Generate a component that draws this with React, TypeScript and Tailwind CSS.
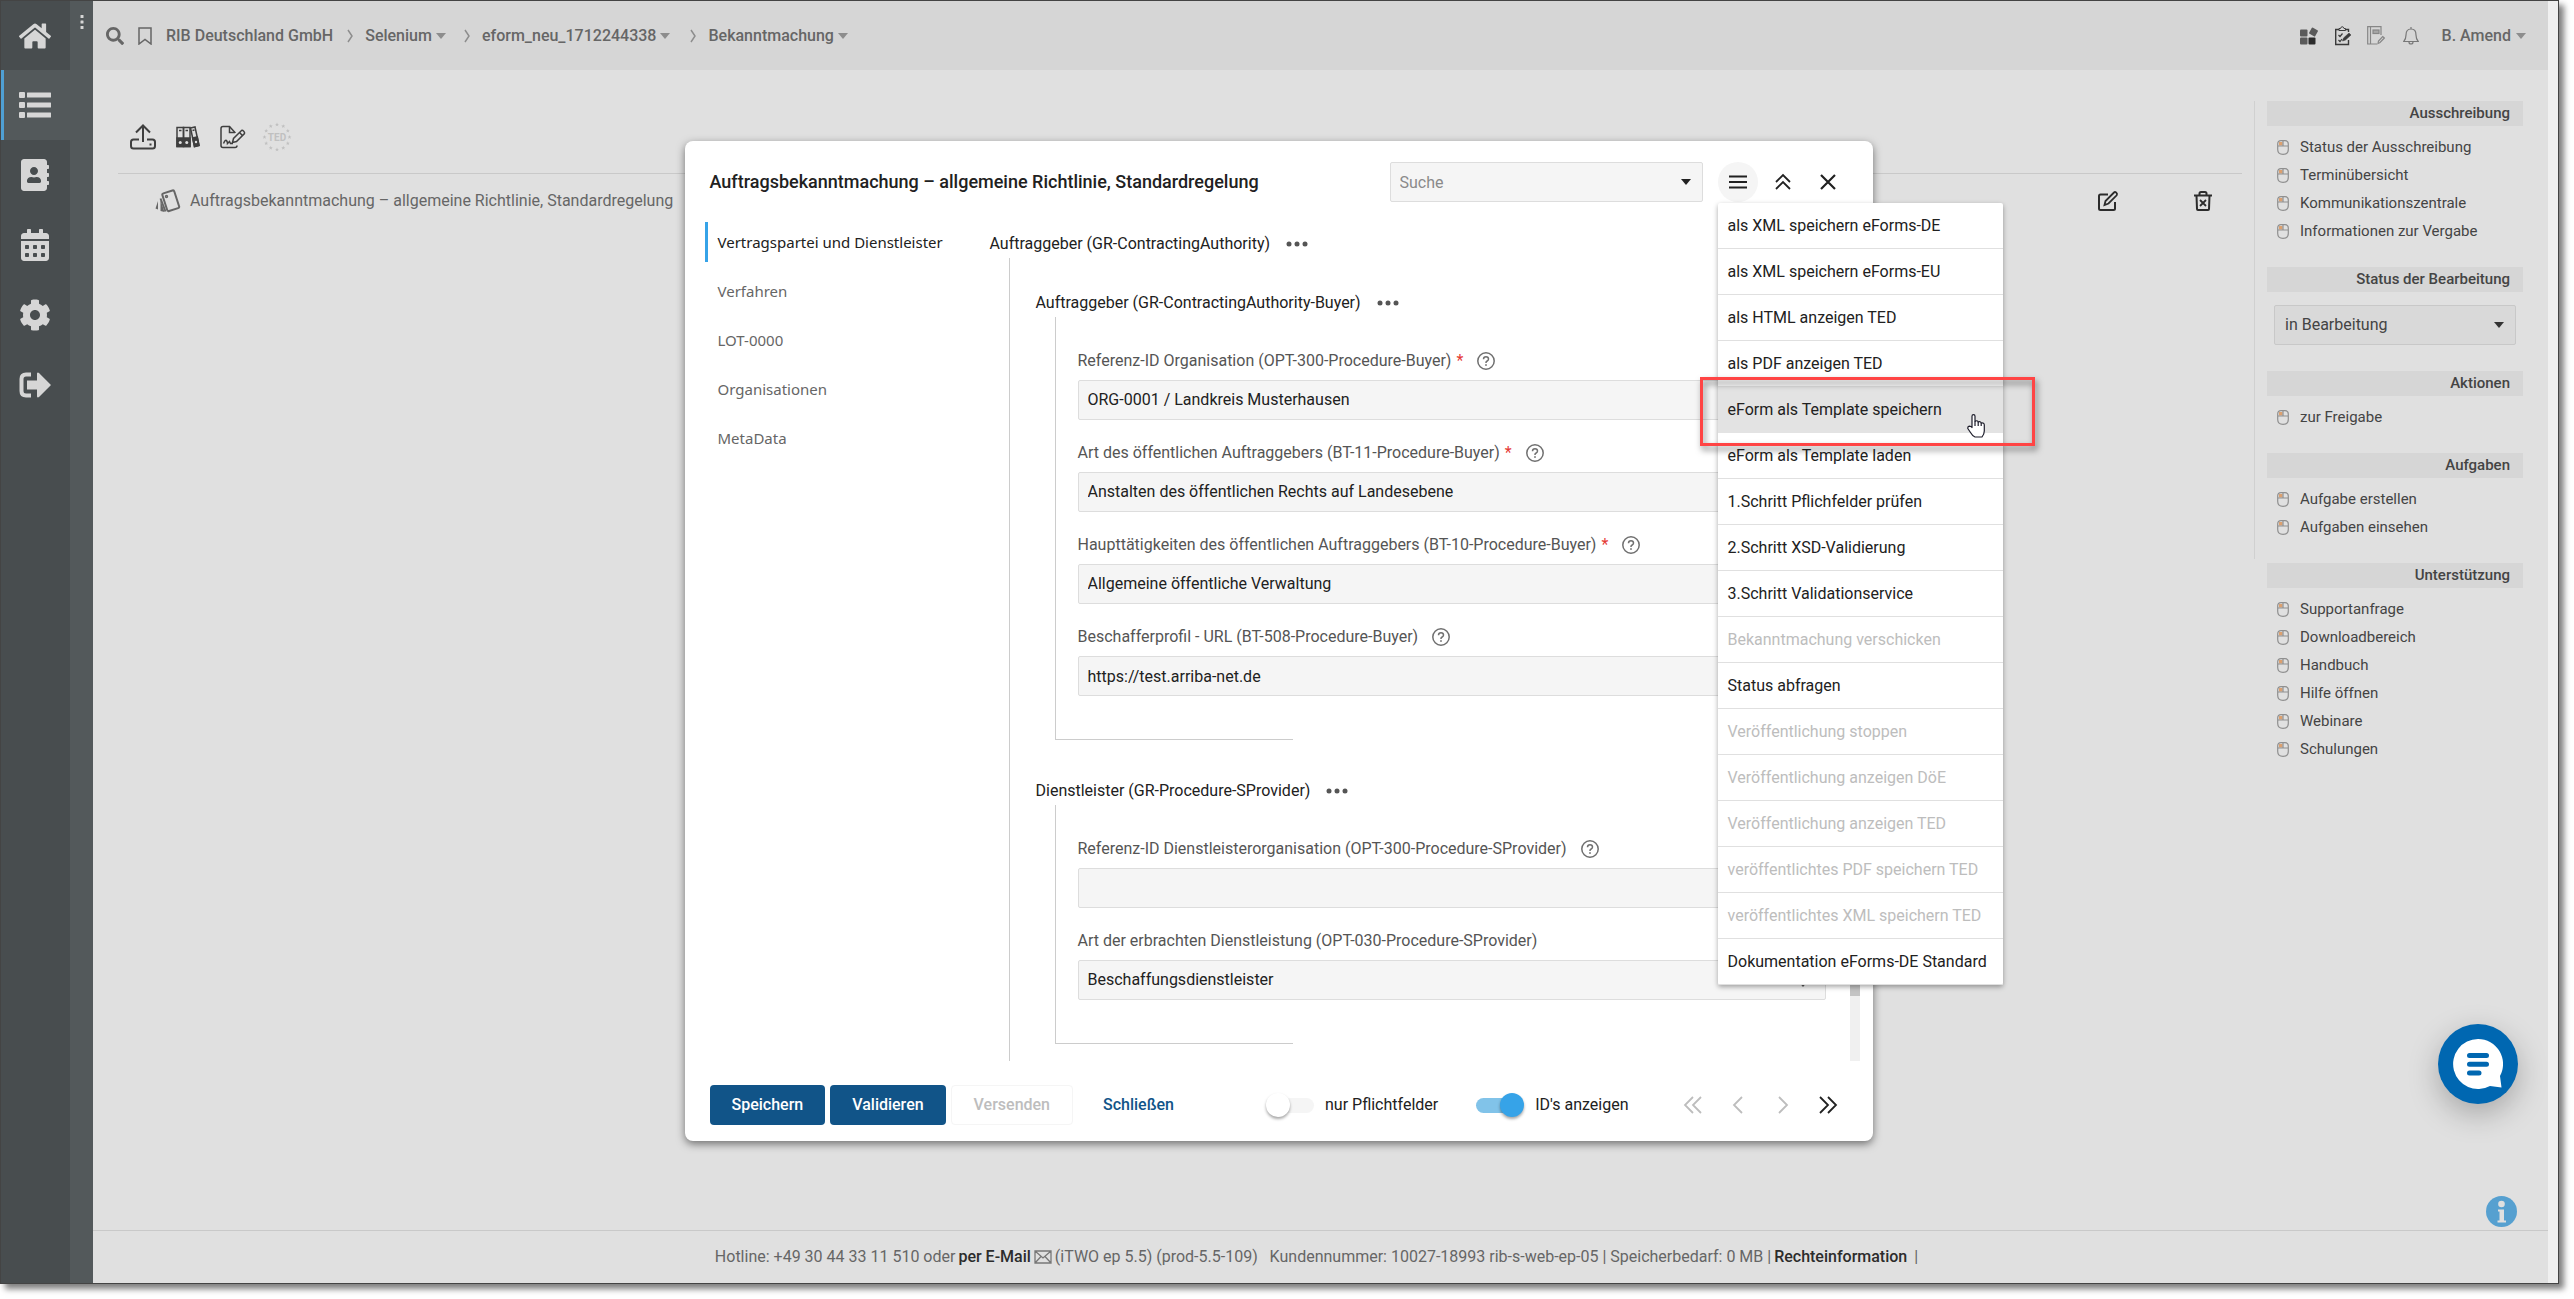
import { useState } from "react";
import type { ReactNode } from "react";
import { FaAddressBook, FaCalendarAlt, FaCog, FaHome, FaSearch } from "react-icons/fa";

interface IconProps {
  className?: string;
}

const Caret = ({ className = "" }: IconProps) => (
  <svg viewBox="0 0 10 6" className={`h-[6px] w-[10px] shrink-0 ${className}`} fill="currentColor" aria-hidden="true">
    <path d="M0 0H10L5 6Z" />
  </svg>
);

const Crumb = () => (
  <svg viewBox="0 0 6 14" className="h-[14px] w-[6px] shrink-0 text-[#8d8d8d]" fill="none" aria-hidden="true">
    <path d="M1 1L5 7L1 13" stroke="currentColor" strokeWidth="1.5" />
  </svg>
);

const ListIcon = () => (
  <svg viewBox="0 0 32 28" className="h-7 w-8" fill="currentColor" aria-hidden="true">
    <rect x="0" y="1" width="6" height="6" rx="1" />
    <rect x="8" y="1.500" width="24" height="5" rx="0.500" />
    <rect x="0" y="11" width="6" height="6" rx="1" />
    <rect x="8" y="11.500" width="24" height="5" rx="0.500" />
    <rect x="0" y="21" width="6" height="6" rx="1" />
    <rect x="8" y="21.500" width="24" height="5" rx="0.500" />
  </svg>
);

const ExitIcon = () => (
  <svg viewBox="0 0 32 26" className="h-[26px] w-8" aria-hidden="true">
    <path d="M12 2.500H7Q2.500 2.500 2.500 7V19Q2.500 23.500 7 23.500H12" fill="none" stroke="currentColor" strokeWidth="4" />
    <path d="M8 8.500H18V1.500Q18.500 0 20 1L32 13L20 25Q18.500 26 18 24.500V17.500H8Z" fill="currentColor" />
  </svg>
);

const UploadIcon = () => (
  <svg viewBox="0 0 26 26" className="h-[26px] w-[26px]" fill="none" stroke="currentColor" strokeWidth="2" aria-hidden="true">
    <path d="M13 18V2M6 8.500L13 1.500L20 8.500" />
    <path d="M9 15.500H3.500Q1 15.500 1 18V22Q1 24.500 3.500 24.500H22.500Q25 24.500 25 22V18Q25 15.500 22.500 15.500H17" />
    <path d="M19.500 20.500H21.500" />
  </svg>
);

const BindersIcon = () => (
  <svg viewBox="0 0 24 22" className="h-[22px] w-6" fill="none" stroke="currentColor" strokeWidth="1.500" aria-hidden="true">
    <rect x="1" y="1.500" width="6.500" height="19" />
    <rect x="7.500" y="1.500" width="6.500" height="19" />
    <path d="M14.500 2L19 1L23 19.500L18.500 20.500Z" />
    <path d="M1 12H14V20.500H1ZM16.700 12L21.300 11L23 19.500L18.500 20.500Z" fill="currentColor" />
    <path d="M3 4.500H5.500M9.500 4.500H12M16.500 4.500L18.500 4" />
    <circle cx="4.250" cy="16.500" r="1.500" fill="#e0e0e0" stroke="none" />
    <circle cx="10.750" cy="16.500" r="1.500" fill="#e0e0e0" stroke="none" />
    <circle cx="20" cy="16" r="1.200" fill="#e0e0e0" stroke="none" />
  </svg>
);

const SignDocIcon = () => (
  <svg viewBox="0 0 26 24" className="h-6 w-[26px]" fill="none" stroke="currentColor" strokeWidth="1.500" aria-hidden="true">
    <path d="M15 8V7.500L9.500 1.500H3Q1 1.500 1 3.500V20.500Q1 22.500 3 22.500H15Q17 22.500 17 20.500" />
    <path d="M9.500 1.500V7.500H15" />
    <path d="M3.500 18.500Q5.500 14 6.500 15.500T7.500 18.500L9.500 16.500L10.500 18.500H13" />
    <path d="M12.500 17.500L13.500 13.500L21.500 5.500Q22.500 5 23.700 6.200T24.500 8.500L16.500 16.500Z" />
    <path d="M19.500 7.500L22.500 10.500" />
  </svg>
);

const STARS = Array.from({ length: 12 }, (_, i) => ({
  x: 15 + 12.5 * Math.sin((i * Math.PI) / 6),
  y: 15 - 12.5 * Math.cos((i * Math.PI) / 6),
}));

const TedIcon = () => (
  <svg viewBox="0 0 30 30" className="h-[30px] w-[30px] text-[#c0c0c0]" fill="currentColor" aria-hidden="true">
    {STARS.map(({ x, y }, i) => (
      <path
        key={i}
        transform={`translate(${x} ${y})`}
        d="M0 -2L0.600 -0.600L2 -0.600L0.900 0.300L1.300 1.800L0 0.900L-1.300 1.800L-0.900 0.300L-2 -0.600L-0.600 -0.600Z"
      />
    ))}
    <text x="15" y="18.500" textAnchor="middle" className="text-[10px] font-bold">
      TED
    </text>
  </svg>
);

const CardsIcon = () => (
  <svg viewBox="0 0 26 24" className="h-6 w-[26px]" fill="none" stroke="currentColor" strokeWidth="2" aria-hidden="true">
    <rect x="9.500" y="2.500" width="12.500" height="18.500" rx="1.500" transform="rotate(-18 15.750 11.750)" />
    <circle cx="11.500" cy="7.500" r="0.700" />
    <path d="M5.500 11V22L9.500 23L5.500 11Z" fill="currentColor" stroke="none" />
    <path d="M5.500 9.500L10.500 22.500" />
    <path d="M3 12V20.500L0.500 19.500Z" fill="currentColor" stroke="none" />
  </svg>
);

const EditIcon = () => (
  <svg viewBox="0 0 22 22" className="h-[22px] w-[22px]" fill="none" stroke="currentColor" strokeWidth="2" aria-hidden="true">
    <path d="M11 4.500H3.500Q2 4.500 2 6V18.500Q2 20 3.500 20H16.500Q18 20 18 18.500V12" />
    <path d="M7.500 15L8.500 11L17 2.500Q18 1.500 19.300 2.700T19.700 5.300L11.500 13.500Z" strokeWidth="1.800" />
  </svg>
);

const TrashIcon = () => (
  <svg viewBox="0 0 18 20" className="h-5 w-[18px]" fill="none" stroke="currentColor" strokeWidth="2" aria-hidden="true">
    <path d="M0 4.500H18M5.500 4V2.500Q5.500 1 7 1H11Q12.500 1 12.500 2.500V4" />
    <path d="M2.500 4.500L3 18Q3 19 4 19H14Q15 19 15 18L15.500 4.500" />
    <path d="M6 9L12 15M12 9L6 15" strokeWidth="1.800" />
  </svg>
);

const MouseIcon = () => (
  <svg viewBox="0 0 12 15" className="h-[15px] w-3 shrink-0" fill="none" aria-hidden="true">
    <path d="M2 2H5.500V5.500H2Z" fill="#dca06f" />
    <path
      d="M4 0.700H8Q11.300 0.700 11.300 4V9.500Q11.300 14.300 6 14.300T0.700 9.500V4Q0.700 0.700 4 0.700ZM0.700 6H11.300M6 0.700V6"
      stroke="#8f8f8f"
      strokeWidth="1.200"
    />
  </svg>
);

const HelpIcon = () => (
  <svg viewBox="0 0 18 18" className="h-[18px] w-[18px] text-[#707070]" fill="none" stroke="currentColor" aria-hidden="true">
    <circle cx="9" cy="9" r="8.200" strokeWidth="1.500" />
    <path d="M6.500 7.200Q6.500 4.800 9 4.800T11.500 7.100Q11.500 8.400 10.200 9T9 10.600V11" strokeWidth="1.500" />
    <circle cx="9" cy="13" r="0.600" strokeWidth="0.800" fill="currentColor" />
  </svg>
);

const DotsIcon = () => (
  <svg viewBox="0 0 22 6" className="h-[6px] w-[22px] text-[#555]" fill="currentColor" aria-hidden="true">
    <circle cx="3" cy="3" r="2.500" />
    <circle cx="11" cy="3" r="2.500" />
    <circle cx="19" cy="3" r="2.500" />
  </svg>
);

const BellIcon = () => (
  <svg viewBox="0 0 16 18" className="h-[18px] w-4 text-[#777]" fill="none" stroke="currentColor" strokeWidth="1.200" aria-hidden="true">
    <path d="M8 2Q3 2 3 8Q3 12 0.800 14.500H15.200Q13 12 13 8Q13 2 8 2ZM8 0V2" />
    <path d="M6 15Q6 17 8 17T10 15" />
  </svg>
);

const TilesIcon = () => (
  <svg viewBox="0 0 18 18" className="h-[18px] w-[18px]" fill="#5a5a5a" aria-hidden="true">
    <rect x="0" y="2.500" width="7.500" height="7" rx="1" />
    <rect x="0" y="10.500" width="7.500" height="7" rx="1" />
    <rect x="8.500" y="10.500" width="7" height="7" rx="1" fill="#2c2c2c" />
    <rect x="10" y="1.500" width="7" height="7" rx="1" transform="rotate(30 13.500 5)" />
  </svg>
);

const ClipboardPenIcon = () => (
  <svg viewBox="0 0 17 20" className="h-5 w-[17px] text-[#3a3a3a]" fill="none" stroke="currentColor" aria-hidden="true">
    <path d="M4 3.500H0.700V18.500H13.500V14M11 3.500H13.500V6" strokeWidth="1.400" />
    <path d="M4 4.500V2.500H5.500Q6 0.700 7.200 0.700T9 2.500H10.500V4.500Z" strokeWidth="1" />
    <path d="M3.500 9L5 10.500L7.500 7.500M3.500 14L5 15.500L7 13" strokeWidth="1.200" />
    <path d="M7.500 15L8.500 12L14 7L16 9L10.500 14Z" fill="currentColor" strokeWidth="0.500" />
  </svg>
);

const NotebookPenIcon = () => (
  <svg viewBox="0 0 18 19" className="h-[19px] w-[18px] text-[#868686]" fill="none" stroke="currentColor" strokeWidth="1.200" aria-hidden="true">
    <path d="M10 18H0.700V0.700H14V9M3.500 0.700V18" />
    <rect x="6" y="4" width="6" height="3.500" fill="currentColor" fillOpacity="0.600" />
    <path d="M11 17.500L11.500 15L15.700 10.500L17.300 12L13 16.500Z" />
  </svg>
);

const Chevrons = ({ d, className }: { d: string; className: string }) => (
  <svg viewBox="0 0 20 20" className={`h-5 w-5 ${className}`} fill="none" stroke="currentColor" strokeWidth="1.800" aria-hidden="true">
    <path d={d} />
  </svg>
);

const HandCursor = () => (
  <svg viewBox="0 0 18 24" className="absolute top-[27px] left-[249px] h-6 w-[18px]" fill="#fff" stroke="#1d1d2b" strokeWidth="1.200" strokeLinejoin="round" aria-hidden="true">
    <path d="M5 13.500V2.200Q5 0.700 6.500 0.700T8 2.200V7.500Q10.300 5.800 11.200 8Q13.300 7 14.200 9Q17.300 8.500 17.300 11V17Q17.300 20 15 23H8Q5.500 22 3.500 18.500L0.800 14.500Q0.500 12.500 2.300 12.200Q4 12.200 5 13.500Z" />
    <path d="M8 7.500V12M11.200 8V12M14.200 9V12" fill="none" />
  </svg>
);

const railItems = [
  { label: "Startseite", icon: <FaHome size={32} /> },
  { label: "Liste", icon: <ListIcon />, active: true },
  { label: "Adressbuch", icon: <FaAddressBook size={32} /> },
  { label: "Kalender", icon: <FaCalendarAlt size={32} /> },
  { label: "Einstellungen", icon: <FaCog size={32} /> },
  { label: "Abmelden", icon: <ExitIcon /> },
];

const menuItems = [
  { label: "als XML speichern eForms-DE" },
  { label: "als XML speichern eForms-EU" },
  { label: "als HTML anzeigen TED" },
  { label: "als PDF anzeigen TED" },
  { label: "eForm als Template speichern", hovered: true },
  { label: "eForm als Template laden" },
  { label: "1.Schritt Pflichfelder prüfen" },
  { label: "2.Schritt XSD-Validierung" },
  { label: "3.Schritt Validationservice" },
  { label: "Bekanntmachung verschicken", disabled: true },
  { label: "Status abfragen" },
  { label: "Veröffentlichung stoppen", disabled: true },
  { label: "Veröffentlichung anzeigen DöE", disabled: true },
  { label: "Veröffentlichung anzeigen TED", disabled: true },
  { label: "veröffentlichtes PDF speichern TED", disabled: true },
  { label: "veröffentlichtes XML speichern TED", disabled: true },
  { label: "Dokumentation eForms-DE Standard" },
];

const tabs = ["Vertragspartei und Dienstleister", "Verfahren", "LOT-0000", "Organisationen", "MetaData"];

const Rail = () => (
  <nav className="flex shrink-0">
    <div className="flex w-[69px] flex-col bg-[#484d4f]">
      {railItems.map(({ label, icon, active }) => (
        <button
          key={label}
          aria-label={label}
          className={`flex h-[70px] w-full items-center justify-center border-l-3 pr-[5px] text-[#d6d6d6] first:h-[69px] ${
            active ? "border-[#4f9fd3] bg-[#53595b]" : "border-transparent"
          }`}
        >
          {icon}
        </button>
      ))}
    </div>
    <div className="flex w-[23px] justify-center bg-[#53595b] pt-[14px]">
      <svg viewBox="0 0 4 14" className="h-[14px] w-1" fill="#d6d6d6" aria-hidden="true">
        <rect x="0.500" y="0" width="3" height="3" rx="0.500" />
        <rect x="0.500" y="5.500" width="3" height="3" rx="0.500" />
        <rect x="0.500" y="11" width="3" height="3" rx="0.500" />
      </svg>
    </div>
  </nav>
);

const Topbar = () => (
  <header className="flex h-[69px] shrink-0 items-center justify-between bg-[#d6d6d6] pr-[22px] pl-[13px] font-medium text-[#666]">
    <nav className="flex items-center">
      <button aria-label="Suchen" className="mr-[14px]">
        <FaSearch size={18} />
      </button>
      <button aria-label="Lesezeichen" className="mr-[14px]">
        <svg viewBox="0 0 14 18" className="h-[18px] w-[14px]" fill="none" aria-hidden="true">
          <path d="M1 1H13V17L7 12.500L1 17Z" stroke="currentColor" strokeWidth="1.500" />
        </svg>
      </button>
      <a href="#firma" className="mr-[14px]">RIB Deutschland GmbH</a>
      <Crumb />
      <a href="#selenium" className="mr-[18px] ml-3 flex items-center gap-1">
        Selenium <Caret className="text-[#8d8d8d]" />
      </a>
      <Crumb />
      <a href="#eform" className="mr-5 ml-3 flex items-center gap-1">
        eform_neu_1712244338 <Caret className="text-[#8d8d8d]" />
      </a>
      <Crumb />
      <a href="#bekanntmachung" className="ml-3 flex items-center gap-1">
        Bekanntmachung <Caret className="text-[#8d8d8d]" />
      </a>
    </nav>
    <div className="flex items-center">
      <button aria-label="Kacheln" className="mr-[17px]"><TilesIcon /></button>
      <button aria-label="Aufgaben" className="mr-[15px]"><ClipboardPenIcon /></button>
      <button aria-label="Notizen" className="mr-[18px]"><NotebookPenIcon /></button>
      <button aria-label="Meldungen" className="mr-[23px]"><BellIcon /></button>
      <button className="flex items-center gap-[5px]">
        B. Amend <Caret className="text-[#8d8d8d]" />
      </button>
    </div>
  </header>
);

const SideSection = ({ title, links, children }: { title: string; links?: string[]; children?: ReactNode }) => (
  <section className="mb-[22px]">
    <h2 className="h-[25px] bg-[#d6d6d6] pr-[13px] text-right text-[15px] leading-[25px] font-medium text-[#444]">{title}</h2>
    {children}
    {links && (
      <ul className="mt-[7px] text-[15px] text-[#444]">
        {links.map((link) => (
          <li key={link}>
            <a href="#link" className="flex h-7 items-center gap-[11px] pl-[10px]">
              <MouseIcon />
              {link}
            </a>
          </li>
        ))}
      </ul>
    )}
  </section>
);

const Sidebar = () => (
  <aside className="flex shrink-0">
    <div className="mr-3 h-[458px] w-px bg-[#d0d0d0]" />
    <div className="w-64">
      <SideSection
        title="Ausschreibung"
        links={["Status der Ausschreibung", "Terminübersicht", "Kommunikationszentrale", "Informationen zur Vergabe"]}
      />
      <SideSection title="Status der Bearbeitung">
        <div className="mx-[7px] mt-[13px] mb-[26px] grid items-center">
          <select
            aria-label="Status der Bearbeitung"
            className="col-start-1 row-start-1 h-10 appearance-none rounded-xs border border-[#c8c8c8] bg-[#d9d9d9] px-[10px] text-[#444]"
          >
            <option>in Bearbeitung</option>
          </select>
          <Caret className="pointer-events-none col-start-1 row-start-1 mr-3 justify-self-end text-[#333]" />
        </div>
      </SideSection>
      <SideSection title="Aktionen" links={["zur Freigabe"]} />
      <SideSection title="Aufgaben" links={["Aufgabe erstellen", "Aufgaben einsehen"]} />
      <SideSection
        title="Unterstützung"
        links={["Supportanfrage", "Downloadbereich", "Handbuch", "Hilfe öffnen", "Webinare", "Schulungen"]}
      />
    </div>
  </aside>
);

const Workspace = () => (
  <div className="flex grow gap-3 pt-[31px] pr-[25px] pl-[25px]">
    <div className="grow">
      <div className="flex h-[73px] items-center gap-5 border-b border-[#c9c9c9] pl-3 text-[#3f3f3f]">
        <button aria-label="Hochladen"><UploadIcon /></button>
        <button aria-label="Ordner"><BindersIcon /></button>
        <button aria-label="Dokument signieren"><SignDocIcon /></button>
        <button aria-label="TED" disabled className="-ml-1"><TedIcon /></button>
      </div>
      <div className="flex h-[53px] items-center pr-[30px] pl-[37px] text-[#666]">
        <CardsIcon />
        <span className="ml-[9px] grow">Auftragsbekanntmachung – allgemeine Richtlinie, Standardregelung</span>
        <button aria-label="Bearbeiten" className="mr-[75px] text-[#2c2c2c]"><EditIcon /></button>
        <button aria-label="Löschen" className="text-[#2c2c2c]"><TrashIcon /></button>
      </div>
    </div>
    <Sidebar />
  </div>
);

interface FieldProps {
  id: string;
  label: string;
  value?: string;
  required?: boolean;
  help?: boolean;
  text?: boolean;
}

const Field = ({ id, label, value = "", required, help = true, text }: FieldProps) => (
  <div>
    <div className="mb-[7px] flex h-6 items-center text-[#555]">
      <label htmlFor={id}>
        {label} {required && <span className="ml-px text-[#e53935]">*</span>}
      </label>
      {help && (
        <button aria-label="Hilfe" className="ml-[14px]"><HelpIcon /></button>
      )}
    </div>
    {text ? (
      <input
        id={id}
        defaultValue={value}
        className="block h-10 w-full rounded-xs border border-[#ddd] bg-[#f5f5f5] px-[9px] text-[#212121]"
      />
    ) : (
      <div className="grid items-center">
        <select
          id={id}
          className="col-start-1 row-start-1 h-10 w-full appearance-none rounded-xs border border-[#ddd] bg-[#f5f5f5] px-[9px] text-[#212121]"
        >
          <option>{value}</option>
        </select>
        <Caret className="pointer-events-none col-start-1 row-start-1 mt-2 mr-[18px] justify-self-end text-[#555]" />
      </div>
    )}
  </div>
);

const GroupTitle = ({ children }: { children: string }) => (
  <h3 className="flex h-7 items-center text-[#212121]">
    {children}
    <button aria-label="Mehr" className="ml-4"><DotsIcon /></button>
  </h3>
);

const Group = ({ title, children }: { title: string; children: ReactNode }) => (
  <section>
    <GroupTitle>{title}</GroupTitle>
    <div className="ml-[19px] border-l border-[#ccc] pt-8">
      <div className="flex flex-col gap-[21px] pb-[43px] pl-[22px]">{children}</div>
      <div className="w-[237px] border-t border-[#ccc]" />
    </div>
  </section>
);

const ActionMenu = () => (
  <ul role="menu" className="absolute top-[41px] left-0 z-10 w-[285px] rounded-xs bg-white shadow-[0_2px_5px_rgba(0,0,0,0.35)]">
    {menuItems.map(({ label, hovered, disabled }) => (
      <li key={label} className="relative">
        <button
          role="menuitem"
          disabled={disabled}
          className={`block h-[46px] w-full border-b px-[10px] text-left whitespace-nowrap ${
            hovered ? "border-[#e3e3e3] bg-[#e3e3e3]" : "border-[#e0e0e0]"
          } ${disabled ? "text-[#bdbdbd]" : "text-[#212121]"}`}
        >
          {label}
        </button>
        {hovered && (
          <>
            <div className="pointer-events-none absolute -top-[10px] -left-[18px] z-10 h-[69px] w-[335px] border-3 border-[#ff4444] drop-shadow-[2px_4px_3px_rgba(0,0,0,0.5)]" />
            <HandCursor />
          </>
        )}
      </li>
    ))}
  </ul>
);

const DialogHeader = () => (
  <div className="flex items-center pl-[5px]">
    <h1 className="grow text-lg font-medium text-[#212121]">Auftragsbekanntmachung – allgemeine Richtlinie, Standardregelung</h1>
    <div className="mr-[15px] grid w-[313px] items-center">
      <input
        aria-label="Suche"
        placeholder="Suche"
        className="col-start-1 row-start-1 h-10 w-full rounded-xs border border-[#ddd] bg-[#f5f5f5] px-[9px] placeholder:text-[#8a8a8a]"
      />
      <Caret className="col-start-1 row-start-1 mr-3 justify-self-end text-[#212121]" />
    </div>
    <div className="flex gap-[5px]">
      <div className="relative">
        <button aria-label="Menü" aria-expanded="true" className="flex h-10 w-10 items-center justify-center rounded-full bg-[#f5f5f5]">
          <svg viewBox="0 0 18 14" className="h-[14px] w-[18px]" stroke="#212121" strokeWidth="2.200" aria-hidden="true">
            <path d="M0 1.500H18M0 7H18M0 12.500H18" />
          </svg>
        </button>
        <ActionMenu />
      </div>
      <button aria-label="Einklappen" className="flex h-10 w-10 items-center justify-center">
        <Chevrons d="M3 10L10 3L17 10M3 17L10 10L17 17" className="text-[#212121]" />
      </button>
      <button aria-label="Dialog schließen" className="flex h-10 w-10 items-center justify-center">
        <svg viewBox="0 0 16 16" className="h-4 w-4" stroke="#212121" strokeWidth="2.200" aria-hidden="true">
          <path d="M1 1L15 15M15 1L1 15" />
        </svg>
      </button>
    </div>
  </div>
);

const Toggle = ({ label, checked, onChange }: { label: string; checked: boolean; onChange: () => void }) => (
  <label className="flex items-center text-[#212121]">
    <input type="checkbox" role="switch" className="sr-only" checked={checked} onChange={onChange} />
    <span className={`mr-[11px] flex items-center ${checked ? "" : "flex-row-reverse"}`}>
      <span className={`h-[15px] w-10 rounded-full ${checked ? "-mr-4 bg-[#81c3e9]" : "-ml-4 bg-[#f5f5f5]"}`} />
      <span
        className={`z-10 h-6 w-6 shrink-0 rounded-full shadow-[0_2px_3px_rgba(0,0,0,0.35)] ${checked ? "bg-[#36a3e8]" : "bg-white"}`}
      />
    </span>
    {label}
  </label>
);

const DialogFooter = () => {
  const [onlyRequired, setOnlyRequired] = useState(false);
  const [showIds, setShowIds] = useState(true);

  return (
    <div className="mt-6 flex items-center justify-between pl-[5px] font-medium">
      <div className="flex gap-[5px]">
        <button className="h-10 rounded bg-[#115488] px-[22px] text-white">Speichern</button>
        <button className="h-10 rounded bg-[#115488] px-[22px] text-white">Validieren</button>
        <button disabled className="h-10 rounded border border-[#f5f5f5] px-[22px] text-[#bdbdbd]">Versenden</button>
        <button className="ml-[3px] h-10 px-[22px] text-[#115488]">Schließen</button>
      </div>
      <div className="flex items-center gap-[38px] font-normal">
        <Toggle label="nur Pflichtfelder" checked={onlyRequired} onChange={() => setOnlyRequired(!onlyRequired)} />
        <Toggle label="ID's anzeigen" checked={showIds} onChange={() => setShowIds(!showIds)} />
        <div className="ml-[6px] flex gap-[5px]">
          <button aria-label="Erste Seite" disabled className="flex h-10 w-10 items-center justify-center">
            <Chevrons d="M10 2L2 10L10 18M18 2L10 10L18 18" className="text-[#bdbdbd]" />
          </button>
          <button aria-label="Vorherige Seite" disabled className="flex h-10 w-10 items-center justify-center">
            <Chevrons d="M14 2L6 10L14 18" className="text-[#bdbdbd]" />
          </button>
          <button aria-label="Nächste Seite" disabled className="flex h-10 w-10 items-center justify-center">
            <Chevrons d="M6 2L14 10L6 18" className="text-[#bdbdbd]" />
          </button>
          <button aria-label="Letzte Seite" className="flex h-10 w-10 items-center justify-center">
            <Chevrons d="M2 2L10 10L2 18M10 2L18 10L10 18" className="text-[#212121]" />
          </button>
        </div>
      </div>
    </div>
  );
};

const FormDialog = () => (
  <div
    role="dialog"
    className="w-[1188px] max-w-full rounded-lg bg-white pt-[21px] pr-[25px] pb-4 pl-5 shadow-[0_3px_9px_rgba(0,0,0,0.5)]"
  >
    <DialogHeader />
    <div className="mt-5 -mr-3 flex">
      <nav className="flex w-[285px] shrink-0 flex-col gap-[9px] font-['Noto_Sans',sans-serif] text-[15px]">
        {tabs.map((tab, i) => (
          <a
            key={tab}
            href="#tab"
            className={`flex h-10 items-center border-l-3 pl-[10px] ${
              i === 0 ? "border-[#36a3e8] text-[#212121]" : "border-transparent text-[#666]"
            }`}
          >
            {tab}
          </a>
        ))}
      </nav>
      <div className="grow pt-2 pr-6">
        <GroupTitle>Auftraggeber (GR-ContractingAuthority)</GroupTitle>
        <div className="ml-[19px] flex flex-col gap-[37px] border-l border-[#ccc] pt-[31px] pb-[17px] pl-[26px]">
          <Group title="Auftraggeber (GR-ContractingAuthority-Buyer)">
            <Field id="org" label="Referenz-ID Organisation (OPT-300-Procedure-Buyer)" value="ORG-0001 / Landkreis Musterhausen" required />
            <Field id="art" label="Art des öffentlichen Auftraggebers (BT-11-Procedure-Buyer)" value="Anstalten des öffentlichen Rechts auf Landesebene" required />
            <Field id="taetigkeit" label="Haupttätigkeiten des öffentlichen Auftraggebers (BT-10-Procedure-Buyer)" value="Allgemeine öffentliche Verwaltung" required />
            <Field id="profil" label="Beschafferprofil - URL (BT-508-Procedure-Buyer)" value="https://test.arriba-net.de" text />
          </Group>
          <Group title="Dienstleister (GR-Procedure-SProvider)">
            <Field id="dienst-org" label="Referenz-ID Dienstleisterorganisation (OPT-300-Procedure-SProvider)" />
            <Field id="dienst-art" label="Art der erbrachten Dienstleistung (OPT-030-Procedure-SProvider)" value="Beschaffungsdienstleister" help={false} />
          </Group>
        </div>
      </div>
      {/* scroll track with its thumb */}
      <div className="w-[10px] bg-[#f0f0f0] pb-[65px]">
        <div className="h-full bg-[#c4c4c4]" />
      </div>
    </div>
    <DialogFooter />
  </div>
);

const PageFooter = () => (
  <footer className="flex h-[53px] shrink-0 items-center justify-center border-t border-[#c9c9c9] pr-2 text-[#666]">
    <p className="flex items-center gap-[3px] whitespace-pre">
      Hotline: +49 30 44 33 11 510 oder
      <a href="#mail" className="flex items-center gap-[3px] font-medium text-[#2c2c2c]">
        per E-Mail
        <svg viewBox="0 0 18 14" className="h-[14px] w-[18px] text-[#777]" fill="none" stroke="currentColor" strokeWidth="1.300" aria-hidden="true">
          <path d="M1 1H17V13H1ZM1 1L9 8L17 1M1 13L7 6.500M17 13L11 6.500" />
        </svg>
      </a>
      {"(iTWO ep 5.5) (prod-5.5-109)   Kundennummer: 10027-18993 rib-s-web-ep-05 | Speicherbedarf: 0 MB |"}
      <a href="#recht" className="font-medium text-[#2c2c2c]">Rechteinformation</a>
      {" |"}
    </p>
  </footer>
);

export default function App() {
  return (
    <div className="h-screen bg-white pr-[15px] pb-[15px] font-[Roboto,sans-serif] text-base">
      <div className="relative flex h-full border border-[#444] shadow-[5px_5px_6px_rgba(0,0,0,0.5)]">
        <Rail />
        <div className="flex min-w-0 grow flex-col bg-[#e0e0e0]">
          <Topbar />
          <Workspace />
          <PageFooter />
        </div>
        <div className="w-[10px] shrink-0 bg-[#f0f0f0]" />

        <div className="absolute inset-0 flex items-center justify-center pr-0.5 pb-0.5">
          <FormDialog />
        </div>

        <button
          aria-label="Chat öffnen"
          className="absolute right-10 bottom-[179px] flex h-20 w-20 items-center justify-center rounded-full bg-[#0067b1] shadow-[0_10px_30px_rgba(0,0,0,0.25)]"
        >
          <svg viewBox="0 0 50 50" className="h-[50px] w-[50px]" aria-hidden="true">
            <path d="M25 0A25 25 0 0 1 47 37L48.500 48.500L37 47A25 25 0 1 1 25 0Z" fill="#fff" />
            <path d="M16.500 16.500H33.500M16.500 25.300H33.500M16.500 34H26" stroke="#0067b1" strokeWidth="5" strokeLinecap="round" />
          </svg>
        </button>
        <button aria-label="Information" className="absolute right-[41px] bottom-14">
          <svg viewBox="0 0 31 31" className="h-[31px] w-[31px]" aria-hidden="true">
            <circle cx="15.500" cy="15.500" r="15.500" fill="#56a0d0" />
            <circle cx="15.500" cy="8" r="3.300" fill="#e0e0e0" />
            <path d="M12 13.500H18V24.500H20V26.500H11.500V24.500H13.500V15.500H12Z" fill="#e0e0e0" />
          </svg>
        </button>
      </div>
    </div>
  );
}
